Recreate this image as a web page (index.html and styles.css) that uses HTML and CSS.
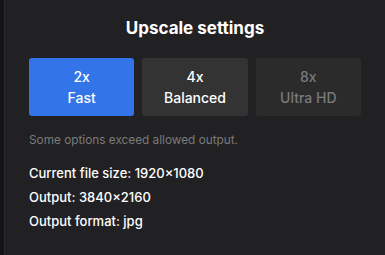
FILE: index.html
```html
<!DOCTYPE html>
<html lang="en">
<head>
    <meta charset="UTF-8">
    <title>Upscale settings</title>
    <link rel="stylesheet" href="styles.css">
</head>
<body>
    <div class="edge"></div>
    <div class="panel">
        <h2 class="title">Upscale settings</h2>
        <div class="options">
            <button class="option active"><span>2x</span><span>Fast</span></button>
            <button class="option"><span>4x</span><span>Balanced</span></button>
            <button class="option disabled"><span>8x</span><span>Ultra HD</span></button>
        </div>
        <p class="note">Some options exceed allowed output.</p>
        <div class="info">
            <p>Current file size: 1920×1080</p>
            <p>Output: 3840×2160</p>
            <p>Output format: jpg</p>
        </div>
    </div>
</body>
</html>
```

FILE: styles.css
```css
body {
    margin: 0;
    height: 255px;
    display: flex;
    background-color: #141414;
    font-family: 'Inter', sans-serif;
    color: #fff;
    overflow: hidden;
}

.edge {
    width: 4px;
    background-color: #141414;
}

.panel {
    flex: 1;
    background-color: #212123;
    border-left: 1px solid #2a2a2c;
    padding: 14px 24px 0 24px;
}

.title {
    margin: 0;
    text-align: center;
    font-size: 17px;
    font-weight: 700;
    line-height: 28px;
}

.options {
    display: flex;
    gap: 8px;
    margin-top: 16px;
}

.option {
    flex: 1;
    height: 58px;
    border: none;
    border-radius: 3px;
    background-color: #333333;
    color: #fff;
    font-family: inherit;
    font-size: 14px;
    font-weight: 500;
    display: flex;
    flex-direction: column;
    align-items: center;
    justify-content: center;
    gap: 4px;
    padding: 0;
}

.option.active {
    background-color: #3375e8;
}

.option.disabled {
    background-color: #2b2b2c;
    color: #7a7a7a;
}

.note {
    margin: 16px 0 0;
    font-size: 11.8px;
    color: #7b7b7b;
    line-height: 16px;
}

.info {
    margin-top: 13px;
}

.info p {
    margin: 0;
    font-size: 13px;
    font-weight: 500;
    line-height: 24px;
}
```
